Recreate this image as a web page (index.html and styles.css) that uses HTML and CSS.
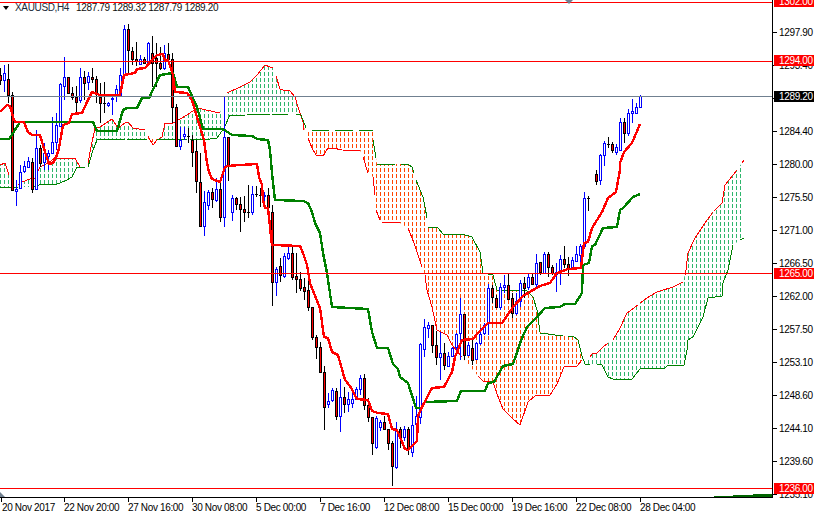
FILE: index.html
```html
<!DOCTYPE html>
<html lang="en">
<head>
<meta charset="utf-8">
<title>XAUUSD,H4</title>
<link rel="stylesheet" href="styles.css">
</head>
<body>
<main class="terminal">
  <section class="plot">
    <div class="legend"><span class="legend-arrow"></span><span class="legend-symbol">XAUUSD,H4</span><span>1287.79 1289.32 1287.79 1289.20</span></div>
    <svg class="chart" viewBox="0 0 772 497" width="772" height="497" xmlns="http://www.w3.org/2000/svg">
      <defs>
        <pattern id="hatch-green" patternUnits="userSpaceOnUse" width="4" height="6"><rect class="hatch-green" width="1" height="4"/></pattern>
        <pattern id="hatch-orange" patternUnits="userSpaceOnUse" width="4" height="6"><rect class="hatch-orange" width="1" height="4"/></pattern>
      </defs>
      <polygon class="cloud-green" points="0,165 5,163 9,175 18,185 22,182 30,179 35,178 40,167 48,163 55,158 75,158 80,167 85,168 83,167 77,167 72,177 65,181 57,184 42,184 33,187 0,187"/>
      <polygon class="cloud-green" points="88,167 90,152 95,128 100,127 112,119 118,128 125,123 128,122 133,128 145,130 148,136 148,139 107,139 97,140 92,150"/>
      <polygon class="cloud-orange" points="148,136 153,145 157,140 157,139 148,139"/>
      <polygon class="cloud-green" points="157,140 162,137 165,123 173,123 187,115 197,108 220,113 227,93 240,87 250,82 257,75 265,65 270,67 273,68 276,76 280,89 283,90 290,91 295,97 298,107 302,120 301,115 296,114 272,114 247,114 230,115 224,128 217,138 210,139 157,139"/>
      <polygon class="cloud-orange" points="304,128 308,130 373,130 373,140 376,158 377,164 408,164 412,167 414,173 416,180 423,197 425,207 427,218 427,222 428,227 438,228 443,234 462,234 472,237 480,252 483,273 493,275 497,290 527,291 533,297 537,310 540,332 563,336 573,336 578,340 582,356 585,364 582,360 577,366 564,367 557,384 550,395 535,396 528,402 520,425 513,419 503,409 497,394 493,382 483,381 478,376 462,357 452,345 447,335 437,330 432,307 427,290 425,275 422,267 414,243 408,228 400,223 382,222 380,220 376,210 375,195 373,177 368,173 363,157 360,150 342,150 333,148 328,148 323,156 316,155 312,148 308,138"/>
      <polygon class="cloud-green" points="585,364 590,357 592,354 597,353 603,347 608,343 613,340 620,328 627,313 638,305 647,298 657,292 673,287 683,282 686,270 688,253 695,238 705,223 713,212 722,203 725,185 737,170 744,160 744,238 740,240 733,245 728,270 723,283 722,296 708,298 703,317 693,337 688,340 687,350 684,365 668,365 665,368 640,369 632,379 613,379 608,377 602,365 590,364"/>

      <g class="span-a">
        <polyline points="0,165 5,163 9,175"/>
        <polyline points="18,185 22,182 30,179 35,178 40,167 48,163 55,158 75,158 80,167 85,168"/>
        <polyline points="88,165 90,152 95,128 100,127 112,119 118,128 125,123 128,122 133,128 145,130"/>
        <polyline points="148,136 153,145 157,140 162,137 165,123 173,123 187,115 197,108 220,113"/>
        <polyline points="227,93 240,87 250,82 257,75 265,65 270,67 273,68"/>
        <polyline points="276,76 280,89 283,90 290,91 295,97 298,107 303,122 304,130"/>
        <polyline points="308,138 312,148 316,155 323,156 328,148 333,148 342,150"/>
        <polyline points="343,150 360,150"/>
        <polyline points="363,157 368,173"/>
        <polyline points="373,177 375,195"/>
        <polyline points="376,210 380,220"/>
        <polyline points="382,222 400,222"/>
        <polyline points="408,228 414,243 422,267"/>
        <polyline points="425,275 427,290 432,307 437,330 447,335 452,345 462,357"/>
        <polyline points="478,376 483,381 493,382 497,394 503,409 513,419 520,425 528,402 535,396 550,395 557,384 564,367 577,366 582,360"/>
        <polyline points="590,357 592,354 597,353 603,347 608,343"/>
        <polyline points="613,340 620,328 627,313 638,305"/>
        <polyline points="640,303 647,298 657,292 673,287 683,282"/>
        <polyline points="685,275 686,270 688,253 695,238 705,223 713,212"/>
        <polyline points="714,211 722,203 725,185 737,170"/>
        <polyline points="742,163 744,160"/>
      </g>
      <g class="span-b">
        <polyline points="0,187 18,187"/>
        <polyline points="33,187 42,184 57,184 65,181 72,177 77,167 85,167"/>
        <polyline points="88,167 93,150 97,140 107,139 125,139"/>
        <polyline points="127,139 147,139"/>
        <polyline points="157,139 187,139"/>
        <polyline points="190,139 210,139 217,138 224,128 230,115 245,115"/>
        <polyline points="247,114 270,114"/>
        <polyline points="272,114 288,114"/>
        <polyline points="296,114 301,115 306,128"/>
        <polyline points="312,130 329,130"/>
        <polyline points="335,130 353,130"/>
        <polyline points="359,130 373,130"/>
        <polyline points="373,140 376,158"/>
        <polyline points="377,164 395,164"/>
        <polyline points="401,164 408,164 412,167 414,173"/>
        <polyline points="416,180 423,197 425,207 427,218"/>
        <polyline points="428,227 438,228 443,234 462,234 472,237 480,252 483,273 493,275 497,290 527,291 533,297 537,310 540,332"/>
        <polyline points="540,333 563,336"/>
        <polyline points="568,336 573,336 578,340 582,356 585,364 590,364"/>
        <polyline points="597,364 602,365 608,377 613,379 632,379 640,369 665,368 668,365 684,365 687,350 688,340 693,337 703,317 708,298 722,296 723,283 728,270 733,245"/>
        <polyline points="740,240 744,238"/>
      </g>

      <path class="wick-blue" d="M4.5 65V92M16.5 180V206M20.5 165V188M24.5 161V173M28.5 157V168M36.5 130V189M44.5 143V170M48.5 150V170M52.5 117V153M56.5 113V150M60.5 83V127M64.5 57V100M80.5 68V103M88.5 72V90M108.5 102V107M112.5 97V115M116.5 85V102M120.5 68V95M124.5 25V75M140.5 55V65M148.5 42V65M164.5 45V70M180.5 127V150M184.5 127V140M204.5 191V236M208.5 190V210M216.5 178V202M224.5 97V227M232.5 195V221M252.5 186V215M264.5 192V202M276.5 267V296M284.5 253V278M288.5 247V260M328.5 393V408M332.5 388V402M340.5 379V432M348.5 392V412M352.5 388V408M356.5 387V400M360.5 375V395M376.5 416V449M380.5 420V431M396.5 422V469M404.5 426V441M412.5 406V457M416.5 396V430M420.5 343V424M424.5 319V357M428.5 322V338M440.5 332V380M448.5 352V367M452.5 347V357M456.5 333V350M460.5 298V360M468.5 342V355M476.5 342V360M480.5 328V345M484.5 323V335M488.5 284V335M500.5 283V310M504.5 275V293M516.5 293V315M520.5 280V307M528.5 273V290M536.5 254V288M544.5 252V273M556.5 263V292M560.5 255V285M572.5 257V270M576.5 246V262M580.5 244V265M584.5 192V247M600.5 154V185M604.5 141V166M616.5 144V155M620.5 118V151M628.5 109V136M632.5 99V123M636.5 103V114M640.5 95V107"/>
      <path class="wick-black" d="M.5 68V85M8.5 64V103M12.5 92V191M32.5 158V193M40.5 145V167M72.5 87V100M76.5 86V113M84.5 71V100M92.5 68V83M96.5 76V103M100.5 83V123M104.5 82V113M128.5 24V75M132.5 47V65M136.5 42V66M144.5 57V63M152.5 36V87M156.5 43V87M160.5 47V70M168.5 43V60M172.5 53V123M176.5 104V147M188.5 128V143M192.5 135V167M196.5 140V193M200.5 153V226M212.5 188V208M220.5 178V222M228.5 137V181M236.5 197V210M240.5 197V232M244.5 196V222M248.5 185V218M256.5 186V197M260.5 188V207M268.5 188V223M272.5 205V306M280.5 258V282M292.5 245V280M296.5 253V293M300.5 272V291M304.5 278V300M308.5 280V311M312.5 307V340M316.5 335V359M320.5 342V373M324.5 366V430M336.5 388V420M344.5 387V413M364.5 374V410M368.5 398V422M372.5 417V455M384.5 416V430M388.5 429V450M392.5 441V486M400.5 427V448M408.5 427V455M432.5 325V353M436.5 331V365M444.5 343V370M464.5 314V360M472.5 338V365M492.5 285V303M496.5 295V308M508.5 273V300M512.5 293V318M524.5 277V298M532.5 273V285M540.5 262V275M548.5 252V277M552.5 265V275M564.5 246V268M568.5 257V276M588.5 196V211M596.5 170V185M608.5 137V148M612.5 142V153M624.5 118V143M187 136h3M247 212h3M255 194h3M259 195h3M103 103.500h3M587 198h3M607 144h3"/>
      <path class="body-blue" d="M3.500 73h2V80h-2zM15.500 189h2V191h-2zM19.500 172h2V188h-2zM23.500 166h2V171h-2zM27.500 161h2V167h-2zM35.500 148h2V189h-2zM43.500 153h2V162h-2zM47.500 153h2V156h-2zM51.500 142h2V153h-2zM55.500 125h2V142h-2zM59.500 84h2V126h-2zM63.500 77h2V86h-2zM79.500 77h2V100h-2zM87.500 76h2V82h-2zM107.500 103h2V105h-2zM111.500 98h2V99h-2zM115.500 89h2V95h-2zM119.500 75h2V95h-2zM123.500 29h2V75h-2zM139.500 59h2V64h-2zM147.500 43h2V62h-2zM163.500 53h2V68h-2zM179.500 140h2V146h-2zM183.500 134h2V136h-2zM203.500 202h2V226h-2zM207.500 192h2V205h-2zM215.500 189h2V200h-2zM223.500 137h2V217h-2zM231.500 198h2V212h-2zM251.500 194h2V212h-2zM263.500 195h2V196h-2zM275.500 269h2V282h-2zM283.500 256h2V276h-2zM287.500 253h2V258h-2zM327.500 401h2V404h-2zM331.500 390h2V400h-2zM339.500 397h2V416h-2zM347.500 399h2V404h-2zM351.500 399h2V403h-2zM355.500 389h2V399h-2zM359.500 378h2V389h-2zM375.500 418h2V447h-2zM379.500 422h2V427h-2zM395.500 429h2V467h-2zM403.500 429h2V437h-2zM411.500 425h2V452h-2zM415.500 416h2V424h-2zM419.500 344h2V417h-2zM423.500 327h2V349h-2zM427.500 325h2V328h-2zM439.500 353h2V357h-2zM447.500 356h2V366h-2zM451.500 348h2V356h-2zM455.500 334h2V347h-2zM459.500 314h2V333h-2zM467.500 345h2V355h-2zM475.500 343h2V359h-2zM479.500 334h2V343h-2zM483.500 325h2V333h-2zM487.500 288h2V323h-2zM499.500 287h2V307h-2zM503.500 285h2V287h-2zM515.500 301h2V313h-2zM519.500 283h2V301h-2zM527.500 277h2V287h-2zM535.500 263h2V284h-2zM543.500 254h2V273h-2zM555.500 272h2V274h-2zM559.500 259h2V273h-2zM571.500 260h2V269h-2zM575.500 254h2V261h-2zM579.500 246h2V255h-2zM583.500 198h2V246h-2zM599.500 155h2V180h-2zM603.500 143h2V155h-2zM615.500 147h2V152h-2zM619.500 122h2V150h-2zM627.500 113h2V133h-2zM631.500 111h2V113h-2zM635.500 107h2V113h-2zM639.500 96h2V107h-2z"/>
      <path class="body-red" d="M-.5 75h2V80h-2zM7.500 79h2V95h-2zM11.500 95h2V190h-2zM31.500 162h2V189h-2zM39.500 148h2V163h-2zM67.500 77h2V93h-2zM71.500 93h2V97h-2zM75.500 97h2V102h-2zM83.500 77h2V83h-2zM91.500 77h2V79h-2zM95.500 79h2V93h-2zM99.500 97h2V103h-2zM127.500 29h2V50h-2zM131.500 51h2V59h-2zM135.500 59h2V61h-2zM143.500 59h2V63h-2zM151.500 53h2V63h-2zM155.500 58h2V63h-2zM159.500 63h2V68h-2zM167.500 54h2V59h-2zM171.500 59h2V107h-2zM175.500 107h2V146h-2zM191.500 140h2V152h-2zM195.500 151h2V181h-2zM199.500 182h2V226h-2zM211.500 192h2V199h-2zM219.500 189h2V217h-2zM227.500 137h2V165h-2zM235.500 198h2V204h-2zM239.500 204h2V209h-2zM243.500 209h2V212h-2zM267.500 195h2V207h-2zM271.500 212h2V282h-2zM279.500 266h2V275h-2zM291.500 253h2V277h-2zM295.500 276h2V279h-2zM299.500 279h2V288h-2zM303.500 287h2V291h-2zM307.500 290h2V307h-2zM311.500 307h2V337h-2zM315.500 337h2V347h-2zM319.500 347h2V372h-2zM323.500 372h2V407h-2zM335.500 391h2V416h-2zM343.500 397h2V404h-2zM363.500 378h2V405h-2zM367.500 405h2V417h-2zM371.500 417h2V443h-2zM383.500 422h2V429h-2zM387.500 429h2V443h-2zM391.500 443h2V466h-2zM399.500 429h2V437h-2zM407.500 429h2V449h-2zM431.500 325h2V345h-2zM435.500 345h2V357h-2zM443.500 353h2V365h-2zM463.500 314h2V355h-2zM471.500 348h2V360h-2zM491.500 288h2V297h-2zM495.500 298h2V307h-2zM507.500 285h2V299h-2zM511.500 298h2V313h-2zM523.500 283h2V288h-2zM531.500 277h2V284h-2zM539.500 262h2V272h-2zM547.500 254h2V267h-2zM551.500 267h2V273h-2zM563.500 259h2V264h-2zM567.500 264h2V269h-2zM595.500 174h2V181h-2zM611.500 144h2V150h-2zM623.500 122h2V133h-2z"/>

      <polyline class="kijun" points="0,139 9,139 13,133 20,122 93,122 97,131 117,131 123,110 127,108 137,108 142,98 149,98 160,75 173,73 177,87 188,87 197,107 203,129 223,129 232,135 252,136 257,139 268,140 270,150 272,173 275,200 303,201 308,203 312,212 315,223 320,233 323,253 327,273 332,307 368,309 372,332 377,348 388,348 393,364 398,369 400,377 408,383 416,408 421,408 425,402 457,401 461,391 485,391 488,383 494,382 503,366 513,364 522,338 527,327 537,317 545,308 560,307 565,304 575,304 582,293 583,265 589,263 592,246 595,245 603,228 617,227 620,210 623,208 633,197 640,194"/>
      <polyline class="tenkan" points="0,112 7,105 10,106 13,117 15,122 24,122 28,132 32,135 40,135 45,152 49,164 53,163 57,155 59,148 63,125 69,123 72,114 82,113 87,102 92,92 100,95 120,95 124,75 135,73 137,69 145,68 152,60 157,55 163,54 165,61 168,60 173,75 175,92 187,93 192,100 197,117 204,140 207,163 209,172 212,179 217,181 220,182 225,167 228,166 240,165 257,164 259,177 262,185 263,200 265,208 268,208 270,227 272,245 300,246 303,253 307,265 310,283 320,308 324,337 328,338 332,352 338,355 345,380 350,386 357,399 368,400 372,411 378,413 388,414 392,429 397,430 405,449 408,450 417,441 418,416 422,407 432,388 444,387 452,372 455,357 462,340 473,339 478,333 488,323 502,323 513,307 523,296 533,290 540,286 550,283 557,273 568,269 581,268 584,243 588,242 592,228 602,212 608,198 616,192 620,170 620,163 624,152 632,143 640,124"/>

      <g class="level">
        <line x1="0" y1="2.500" x2="772" y2="2.500"/>
        <line x1="0" y1="61.500" x2="772" y2="61.500"/>
        <line x1="0" y1="273.500" x2="772" y2="273.500"/>
        <line x1="0" y1="488.500" x2="772" y2="488.500"/>
      </g>
      <line class="bid" x1="0" y1="96.500" x2="772" y2="96.500"/>
      <polygon class="marker" points="565,0 573,0 569,4"/>
      <polygon class="marker" points="0,492 0,497 5,497"/>
      <path class="base-trace" d="M714 496h19v1h-19zM733 495h20v2h-20zM753 494h19v3h-19z"/>
    </svg>
  </section>

  <aside class="price-axis">
    <div class="price-tick">1297.90</div>
    <div class="price-tick">1293.40</div>
    <div class="price-tick">1288.90</div>
    <div class="price-tick">1284.40</div>
    <div class="price-tick">1280.00</div>
    <div class="price-tick">1275.50</div>
    <div class="price-tick">1271.00</div>
    <div class="price-tick">1266.50</div>
    <div class="price-tick">1262.00</div>
    <div class="price-tick">1257.50</div>
    <div class="price-tick">1253.10</div>
    <div class="price-tick">1248.60</div>
    <div class="price-tick">1244.10</div>
    <div class="price-tick">1239.60</div>
    <div class="price-tick">1235.10</div>
    <span class="tag tag-1302">1302.00</span>
    <span class="tag tag-1294">1294.00</span>
    <span class="tag tag-bid">1289.20</span>
    <span class="tag tag-1265">1265.00</span>
    <span class="tag tag-1236">1236.00</span>
  </aside>

  <footer class="time-axis">
    <div class="time-tick time-first">20 Nov 2017</div>
    <div class="time-tick">22 Nov 20:00</div>
    <div class="time-tick">27 Nov 16:00</div>
    <div class="time-tick">30 Nov 08:00</div>
    <div class="time-tick">5 Dec 00:00</div>
    <div class="time-tick">7 Dec 16:00</div>
    <div class="time-tick">12 Dec 08:00</div>
    <div class="time-tick">15 Dec 00:00</div>
    <div class="time-tick">19 Dec 16:00</div>
    <div class="time-tick">22 Dec 08:00</div>
    <div class="time-tick">28 Dec 04:00</div>
  </footer>
</main>
</body>
</html>
```

FILE: styles.css
```css
* { box-sizing: border-box; }

html, body {
  margin: 0;
  padding: 0;
  background: #fff;
}

.terminal {
  width: 814px;
  height: 514px;
  overflow: hidden;
  display: grid;
  grid-template-columns: 773px 41px;
  grid-template-rows: 498px 16px;
  background: #fff;
  color: #000;
  font-family: "Liberation Sans", Arial, sans-serif;
  font-size: 10px;
  letter-spacing: -0.35px;
}

.plot {
  position: relative;
  border-right: 1px solid #000;
  border-bottom: 1px solid #000;
}

.chart { display: block; }

.legend {
  position: absolute;
  top: 2px;
  left: 3px;
  display: flex;
  align-items: center;
  height: 12px;
  line-height: 12px;
  white-space: pre;
  color: #101010;
}

.legend-arrow {
  width: 0;
  height: 0;
  margin-right: 6px;
  border-left: 3.500px solid transparent;
  border-right: 3.500px solid transparent;
  border-top: 4px solid #000;
}

.legend-symbol {
  margin-right: 7px;
  color: #1c2b3a;
}

/* cloud */
.cloud-green { fill: url(#hatch-green); }
.cloud-orange { fill: url(#hatch-orange); }
.hatch-green { fill: #2eb66c; shape-rendering: crispEdges; }
.hatch-orange { fill: #ff4500; shape-rendering: crispEdges; }

.span-a, .span-b { fill: none; stroke-width: 1; shape-rendering: crispEdges; }
.span-a { stroke: #f00; }
.span-b { stroke: #008000; }

/* candles */
.wick-blue, .wick-black, .body-blue, .body-red {
  stroke-width: 1;
  shape-rendering: crispEdges;
}
.wick-blue { stroke: #00f; fill: none; }
.wick-black { stroke: #000; fill: none; }
.body-blue { stroke: #00f; fill: #fff; }
.body-red { stroke: #000; fill: #f00; }

/* moving lines */
.kijun, .tenkan { fill: none; stroke-width: 2.400; shape-rendering: crispEdges; }
.kijun { stroke: #008000; }
.tenkan { stroke: #f00; }

.level line { stroke: #f00; stroke-width: 1; shape-rendering: crispEdges; }
.bid { stroke: #708090; stroke-width: 1; shape-rendering: crispEdges; }
.marker { fill: #708090; }
.base-trace { fill: #006400; }

/* price axis */
.price-axis {
  position: relative;
  padding-top: 16px;
  grid-row: 1 / span 2;
  overflow: hidden;
}

.price-tick {
  height: 33px;
  line-height: 33px;
  padding-left: 6px;
  background: linear-gradient(#000, #000) 0 center / 4px 1px no-repeat;
}

.tag {
  position: absolute;
  left: 1px;
  width: 40px;
  height: 11px;
  line-height: 11px;
  padding-left: 5px;
  background: #f00;
  color: #fff;
}
.tag-1302 { top: -4px; }
.tag-1294 { top: 55px; }
.tag-bid { top: 91px; background: #000; }
.tag-1265 { top: 268px; }
.tag-1236 { top: 483px; }

/* time axis */
.time-axis {
  display: flex;
  grid-column: 1;
  grid-row: 2;
}

.time-tick {
  flex: 0 0 64px;
  height: 16px;
  padding-top: 3px;
  line-height: 13px;
  white-space: nowrap;
  background: linear-gradient(#000, #000) 0 0 / 1px 4px no-repeat;
}

.time-first {
  padding-left: 2px;
  background-position: 1px 0;
}
```
